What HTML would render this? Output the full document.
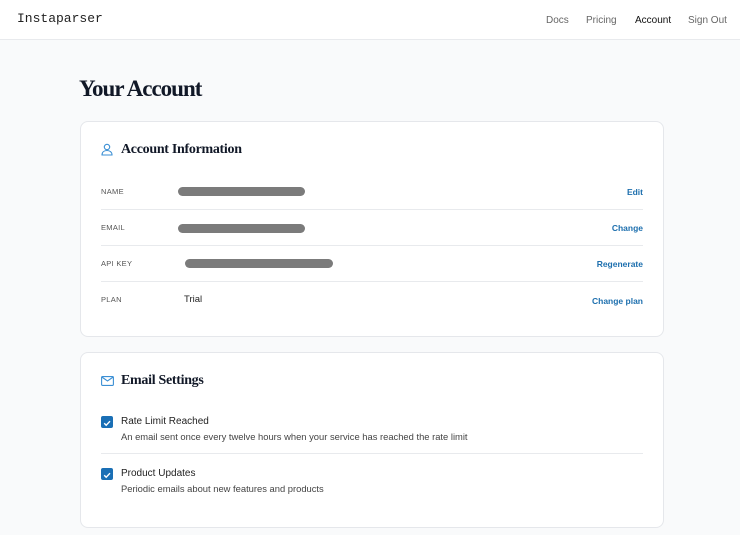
<!DOCTYPE html>
<html><head><style>
*{margin:0;padding:0;box-sizing:border-box}
body{width:740px;height:535px;overflow:hidden;background:#f9fafb;font-family:"Liberation Sans",sans-serif;position:relative}
.hdr{position:absolute;left:0;top:0;width:740px;height:40px;background:#fff;border-bottom:1px solid #e8eaed}
.logo{position:absolute;left:17px;top:11px;font-family:"Liberation Mono",monospace;font-size:13px;color:#222}
.nav{position:absolute;top:15px;font-size:10px;color:#666}
.bar{position:absolute;top:0;height:1px;background:#ccc}
h1{position:absolute;left:79px;top:76px;font-family:"Liberation Serif",serif;font-size:23px;letter-spacing:-1px;color:#111827;font-weight:bold}
.card{position:absolute;left:80px;width:584px;background:#fff;border:1px solid #e5e7eb;border-radius:8px}
.ttl{position:absolute;left:40px;font-family:"Liberation Serif",serif;font-size:14px;font-weight:bold;color:#111827;letter-spacing:-.3px}
.lbl{position:absolute;left:20px;font-size:7.5px;color:#555;letter-spacing:.3px}
.red{position:absolute;height:9px;border-radius:5px;background:#7b7b7b}
.lnk{position:absolute;right:20px;font-size:8.5px;color:#1d6fae;font-weight:bold}
.div{position:absolute;left:20px;right:20px;height:1px;background:#e8eaed}
.cb{position:absolute;left:20px;width:12px;height:12px;border-radius:2px;background:#1a6fb5}
.t1{position:absolute;left:40px;font-size:10px;color:#222}
.t2{position:absolute;left:40px;font-size:9.4px;color:#444}
</style></head><body>
<div class="bar" style="left:300px;width:150px"></div><div class="bar" style="left:362px;width:29px;height:2px;background:#3b5f8a"></div>
<div class="hdr"><div class="logo">Instaparser</div>
<div class="nav" style="left:546px">Docs</div><div class="nav" style="left:586px">Pricing</div><div class="nav" style="left:635px;color:#111">Account</div><div class="nav" style="left:688px">Sign Out</div></div>
<h1>Your Account</h1>
<div class="card" style="top:121px;height:216px">
<svg style="position:absolute;left:20px;top:21px" width="12" height="13" viewBox="0 0 12 13" fill="none" stroke="#3b8fd4" stroke-width="1.1"><circle cx="6" cy="4" r="2.7"/><path d="M1 12c0-3 2.2-4.5 5-4.5s5 1.5 5 4.5z"/></svg>
<div class="ttl" style="top:20px">Account Information</div>
<div class="lbl" style="top:65px">NAME</div><div class="red" style="left:97px;top:65px;width:127px"></div><div class="lnk" style="top:65px">Edit</div>
<div class="div" style="top:87px"></div>
<div class="lbl" style="top:101px">EMAIL</div><div class="red" style="left:97px;top:102px;width:127px"></div><div class="lnk" style="top:101px">Change</div>
<div class="div" style="top:123px"></div>
<div class="lbl" style="top:137px">API KEY</div><div class="red" style="left:104px;top:137px;width:148px"></div><div class="lnk" style="top:137px">Regenerate</div>
<div class="div" style="top:159px"></div>
<div class="lbl" style="top:173px">PLAN</div><div style="position:absolute;left:103px;top:172px;font-size:9.5px;color:#222">Trial</div><div class="lnk" style="top:174px">Change plan</div>
</div>
<div class="card" style="top:352px;height:176px">
<svg style="position:absolute;left:20px;top:23px" width="13" height="10" viewBox="0 0 13 10" fill="none" stroke="#3b8fd4" stroke-width="1.1"><rect x=".6" y=".6" width="11.8" height="8.8" rx="1"/><path d="M.8 1l5.7 4 5.7-4"/></svg>
<div class="ttl" style="top:20px">Email Settings</div>
<div class="cb" style="top:63px"><svg width="12" height="12" viewBox="0 0 12 12"><path d="M3.2 6.2l2 2 3.8-4" stroke="#fff" stroke-width="1.4" fill="none"/></svg></div>
<div class="t1" style="top:63px">Rate Limit Reached</div>
<div class="t2" style="top:78px">An email sent once every twelve hours when your service has reached the rate limit</div>
<div class="div" style="top:100px"></div>
<div class="cb" style="top:115px"><svg width="12" height="12" viewBox="0 0 12 12"><path d="M3.2 6.2l2 2 3.8-4" stroke="#fff" stroke-width="1.4" fill="none"/></svg></div>
<div class="t1" style="top:115px">Product Updates</div>
<div class="t2" style="top:130px">Periodic emails about new features and products</div>
</div>
</body></html>
